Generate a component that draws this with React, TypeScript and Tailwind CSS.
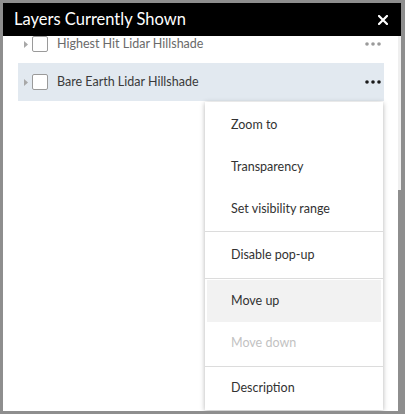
import React from 'react';

const font = { fontFamily: '"Lato", "Open Sans", "Liberation Sans", sans-serif' };

function Caret() {
  return (
    <svg width="4" height="7" viewBox="0 0 4 7" className="shrink-0">
      <path d="M0 0 L4 3.5 L0 7 Z" fill="#a8a8a8" />
    </svg>
  );
}

function Dots({ color }: { color: string }) {
  return (
    <svg width="16" height="4" viewBox="0 0 16 4">
      <circle cx="2" cy="2" r="1.8" fill={color} />
      <circle cx="8" cy="2" r="1.8" fill={color} />
      <circle cx="14" cy="2" r="1.8" fill={color} />
    </svg>
  );
}

function LayerRow({ title, active }: { title: string; active?: boolean }) {
  return (
    <div
      className={`flex items-center h-[38px] ml-[15px] mr-[14px] pl-[6px] pr-[3px] ${
        active ? 'bg-[#e2e9f0]' : ''
      }`}
    >
      <Caret />
      <div className="ml-[4px] w-[16px] h-[16px] border border-[#9a9a9a] rounded-[2px] bg-white shrink-0" />
      <span className={`ml-[9px] text-[12.5px] flex-1 ${active ? 'text-[#3a3a3a]' : 'text-[#6a6a6a]'}`}>
        {title}
      </span>
      <Dots color={active ? '#1a1a1a' : '#9a9a9a'} />
    </div>
  );
}

function MenuItem({ label, hover, disabled }: { label: string; hover?: boolean; disabled?: boolean }) {
  return (
    <div
      className={`h-[42px] flex items-center pl-[24px] mx-[2px] text-[12.5px] ${
        hover ? 'bg-[#f2f2f2]' : ''
      } ${disabled ? 'text-[#c2c2c2]' : 'text-[#323232]'}`}
    >
      {label}
    </div>
  );
}

export default function App() {
  return (
    <div className="w-[405px] h-[414px] bg-[#8e8e8e] pt-[3px] pl-[3px] pr-[4px] pb-[3px]" style={font}>
      <div className="w-full h-full bg-white flex flex-col overflow-hidden">
        {/* header */}
        <div className="h-[33px] bg-black flex items-center justify-between pl-[11px] pr-[13px] shrink-0">
          <span className="text-white text-[16.5px]">Layers Currently Shown</span>
          <svg width="10" height="10" viewBox="0 0 10 10">
            <path d="M1 1 L9 9 M9 1 L1 9" stroke="#fff" strokeWidth="2.2" strokeLinecap="square" />
          </svg>
        </div>

        <div className="flex flex-1 min-h-0">
          {/* layer list */}
          <div className="relative flex-1 overflow-hidden">
            <div className="-mt-[11px]">
              <LayerRow title="Highest Hit Lidar Hillshade" />
              <LayerRow title="Bare Earth Lidar Hillshade" active />
            </div>

            {/* options menu */}
            <div className="absolute left-[202px] top-[66px] w-[178px] h-[308px] bg-white shadow-[0_1px_5px_rgba(0,0,0,0.3)]">
              <div className="pt-[2px] pb-[1px]">
                <MenuItem label="Zoom to" />
                <MenuItem label="Transparency" />
                <MenuItem label="Set visibility range" />
              </div>
              <div className="h-px bg-[#dcdcdc]" />
              <div className="py-[2px]">
                <MenuItem label="Disable pop-up" />
              </div>
              <div className="h-px bg-[#dcdcdc]" />
              <div className="pt-[1px] pb-[2px]">
                <MenuItem label="Move up" hover />
                <MenuItem label="Move down" disabled />
              </div>
              <div className="h-px bg-[#dcdcdc]" />
              <div>
                <MenuItem label="Description" />
              </div>
            </div>
          </div>

          {/* scrollbar */}
          <div className="w-[3px] bg-[#efefef] flex flex-col">
            <div className="h-[154px]" />
            <div className="flex-1 bg-[#8e8e8e]" />
          </div>
        </div>
      </div>
    </div>
  );
}
